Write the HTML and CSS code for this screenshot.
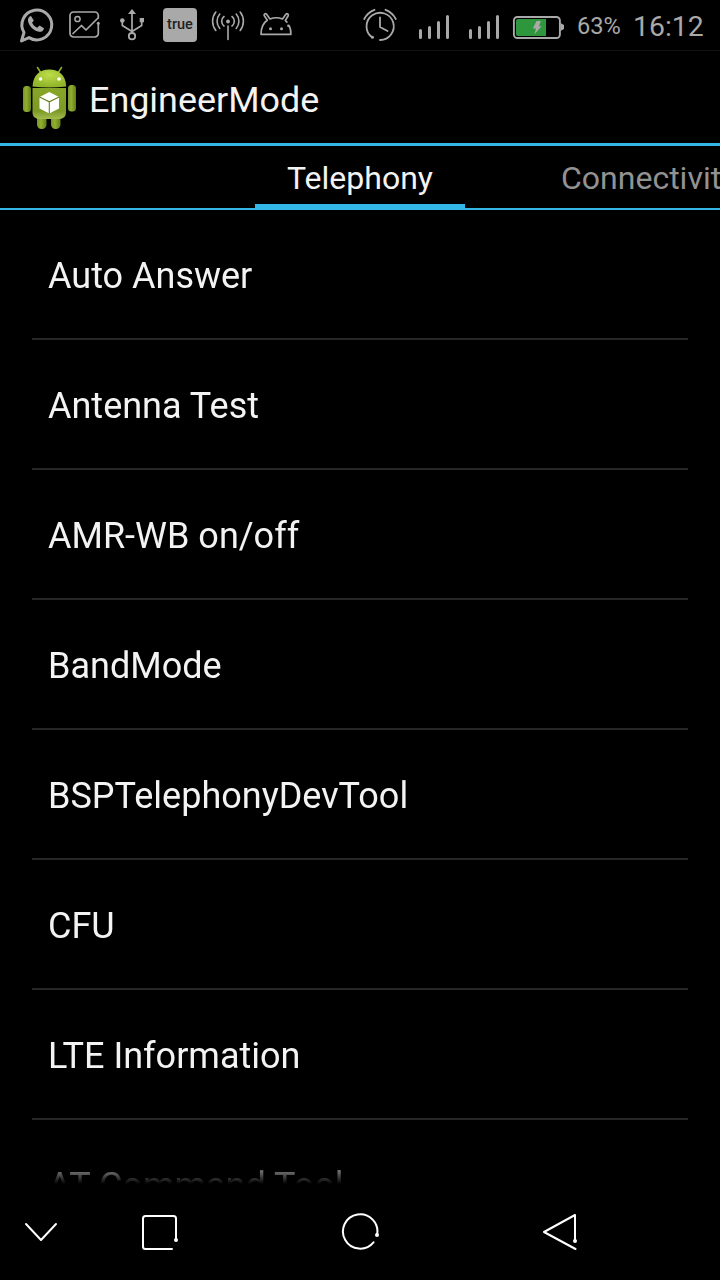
FILE: index.html
```html
<!DOCTYPE html>
<html lang="en">
<head>
<meta charset="utf-8">
<title>EngineerMode</title>
<link rel="stylesheet" href="styles.css">
</head>
<body>
<div class="screen">
  <header class="status">
    <div class="notifications">
      <svg class="icon" viewBox="16 0 40 50"><path d="M21.500 41 24 32.500A14.900 14.900 0 1 1 29 37.600Z" stroke-width="3"/><path class="fill" d="M31 16c-2 .5-3.300 2.300-3 4.800.7 5.200 5.800 10.200 11 11 2.500.3 4.800-1.200 5-3.600l-4.400-2.700-2.400 2.200c-2.300-1-4.100-2.700-5.100-5l1.700-2.300Z"/></svg>
      <svg class="icon" viewBox="64 0 40 50"><path d="M98.300 18V15.500a3.500 3.500 0 0 0-3.500-3.500H73.500a3.500 3.500 0 0 0-3.500 3.500v18a3.500 3.500 0 0 0 3.500 3.500H94.800a3.500 3.500 0 0 0 3.500-3.500V24M73 33.500 81.500 25.500 86 30 98 18" stroke-width="1.700"/><circle cx="77.500" cy="19" r="2.600" stroke-width="1.500"/><circle class="fill" cx="98.300" cy="23.200" r="1.500"/></svg>
      <svg class="icon" viewBox="112 0 40 50"><path d="M132 13V33M122.300 22v3.500L132 31.500 141.700 25.500V22" stroke-width="1.700"/><path class="fill" d="M132 9l4 5h-8zM139.700 18h4.300v4.300h-4.300z"/><circle class="fill" cx="122.300" cy="20.500" r="2.300"/><circle cx="132" cy="36.200" r="3.200" stroke-width="1.800"/></svg>
      <div class="true-slot"><span class="true-badge">true</span></div>
      <svg class="icon" viewBox="208 0 40 50"><path d="M228 26V39.500M224 16.500a6 6 0 0 0 0 9.500M232 16.500a6 6 0 0 1 0 9.500M219.800 14a11 11 0 0 0 0 14.500M236.200 14a11 11 0 0 1 0 14.500M215.800 12a15 15 0 0 0 0 18.500M240.200 12a15 15 0 0 1 0 18.500" stroke-width="1.600"/><circle class="fill" cx="228" cy="21.500" r="1.900"/></svg>
      <svg class="icon" viewBox="256 0 40 50"><path d="M289.500 26.500c1 2 1.400 4.500 1.400 7.800H261c0-7 1.800-11 6.300-14l-3-4.500c-.8-1.600 1.200-2.900 2.300-1.500L270 19c4-1.600 8.500-1.600 12.500 0l3.400-4.700c1.200-1.300 3 0 2.300 1.500l-2.900 4.700 1.600 1.700" stroke-width="1.700"/><circle class="fill" cx="270.500" cy="28.800" r="1.500"/><circle class="fill" cx="281.500" cy="28.800" r="1.500"/><circle class="fill" cx="288.500" cy="25.800" r="1.400"/></svg>
    </div>
    <div class="indicators">
      <svg class="icon alarm" viewBox="360 0 40 50"><path d="M372 37.300A13.600 13.600 0 1 1 380 40M364.200 19A19 19 0 0 1 374.500 9.800M395.800 19A19 19 0 0 0 385.500 9.800M380 17.500V27L387.500 31" stroke-width="1.800"/><circle class="fill" cx="372.500" cy="37.300" r="1.500"/></svg>
      <svg class="icon signal" viewBox="414 0 40 50"><path d="M420.500 30.500V37.500M429.500 27.500V37.500M438.500 22.500V37.500M447.500 16.500V37.500" stroke-width="3"/></svg>
      <svg class="icon signal second" viewBox="414 0 40 50"><path d="M420.500 30.500V37.500M429.500 27.500V37.500M438.500 22.500V37.500M447.500 16.500V37.500" stroke-width="3"/></svg>
      <svg class="battery" viewBox="510 0 56 50"><path class="charge" d="M518 19h28v17h-28a2 2 0 0 1-2-2v-13a2 2 0 0 1 2-2Z"/><rect x="513.900" y="17" width="46" height="21" rx="3.500" stroke-width="1.900"/><path class="fill" d="M560.500 23 564 25v4l-3.500 2ZM536.500 21h4.300l-1.800 5.200h2.500L534.300 34.500l1.700-6h-3.200Z"/></svg>
      <span class="percent">63%</span>
      <span class="clock">16:12</span>
    </div>
  </header>
  <div class="action-bar">
    <svg class="app-icon" viewBox="20 64 58 68">
      <defs>
        <linearGradient id="limb" x1="0" x2="1"><stop offset="0" stop-color="#78942a"/><stop offset=".4" stop-color="#91b02d"/><stop offset="1" stop-color="#627c1c"/></linearGradient>
        <linearGradient id="torso" x1="0" x2="0" y1="0" y2="1"><stop offset="0" stop-color="#86a628"/><stop offset=".75" stop-color="#7d9a25"/><stop offset="1" stop-color="#a3bd50"/></linearGradient>
        <radialGradient id="head" cx=".5" cy=".3" r=".65"><stop offset="0" stop-color="#bddc48"/><stop offset="1" stop-color="#91b52a"/></radialGradient>
      </defs>
      <path d="M37.500 67.500 41 73M61.500 67.500 58 73" fill="none" stroke="#8dab35" stroke-width="1.600" stroke-linecap="round"/>
      <rect x="37" y="113" width="9.500" height="16" rx="4.500" fill="url(#limb)"/>
      <rect x="51" y="113" width="9.500" height="16" rx="4.500" fill="url(#limb)"/>
      <rect x="23" y="86" width="8" height="26" rx="3.500" fill="url(#limb)"/>
      <rect x="68" y="85" width="8" height="26.500" rx="3.500" fill="url(#limb)"/>
      <path d="M32.500 88H66V112.500Q66 119 59 119H39.500Q32.500 119 32.500 112.500Z" fill="url(#torso)"/>
      <path d="M32.500 86.500C33 75 40 69.500 49.300 69.500S65.800 75 66.200 86.500Q49 88.500 32.500 86.500Z" fill="url(#head)"/>
      <circle cx="40.500" cy="79" r="1.800" fill="#fff"/><circle cx="59" cy="79" r="1.800" fill="#fff"/>
      <path d="M49.300 92 59 97V108.500L49.300 113.500 39.500 108.500V97Z" fill="#fff"/>
      <path d="M39.500 97 49.300 101.800 59 97M49.300 101.800V113.500" fill="none" stroke="#66801f" stroke-width="1.100"/>
    </svg>
    <h1 class="title">EngineerMode</h1>
  </div>
  <nav class="tabs">
    <div class="tab active">Telephony</div>
    <div class="tab next">Connectivity</div>
  </nav>
  <main class="list">
    <div class="row">Auto Answer</div>
    <div class="row">Antenna Test</div>
    <div class="row">AMR-WB on/off</div>
    <div class="row">BandMode</div>
    <div class="row">BSPTelephonyDevTool</div>
    <div class="row">CFU</div>
    <div class="row">LTE Information</div>
    <div class="row">AT Command Tool</div>
  </main>
  <footer class="nav">
    <svg class="hide" viewBox="21 1184 40 96"><path d="M26 1224 41 1240 56 1224"/></svg>
    <svg class="recent" viewBox="140 1184 40 96"><path d="M176 1240V1218.500Q176 1216 173.500 1216H145.500Q143 1216 143 1218.500V1246.500Q143 1249 145.500 1249H172"/><circle class="dot" cx="176" cy="1240" r="2"/></svg>
    <svg class="home" viewBox="340 1184 40 96"><path d="M377 1235A17.200 17.200 0 1 0 373.500 1242.300"/><circle class="dot" cx="377" cy="1235" r="2"/></svg>
    <svg class="back" viewBox="540 1184 40 96"><path d="M575 1241V1215L544 1232 575.500 1249"/><circle class="dot" cx="575" cy="1241" r="2"/></svg>
  </footer>
</div>
</body>
</html>
```
FILE: styles.css
```css
* { box-sizing: border-box; }
body { margin: 0; background: #000; font-family: Roboto, sans-serif; }
.screen {
  display: flex;
  flex-direction: column;
  width: 720px;
  height: 1280px;
  overflow: hidden;
  background: #000;
  color: #f3f3f3;
}

.status {
  display: flex;
  justify-content: space-between;
  height: 51px;
  padding: 0 16px;
  border-bottom: 1px solid #121212;
  color: #a9a9a9;
}
.notifications { display: flex; gap: 8px; }
.indicators { display: flex; }
.icon, .battery {
  width: 40px;
  height: 50px;
  fill: none;
  stroke: #a9a9a9;
  stroke-linecap: round;
  stroke-linejoin: round;
}
.status .fill { fill: #a9a9a9; stroke: none; }
.true-slot { display: flex; align-items: center; justify-content: center; width: 40px; height: 50px; }
.true-badge {
  width: 34px;
  height: 34px;
  border-radius: 4px;
  background: #a9a9a9;
  color: #222;
  font: 500 14.5px/34px Roboto, sans-serif;
  text-align: center;
}
.alarm { margin-right: 14px; }
.second { margin-left: 10px; }
.battery { width: 56px; margin-left: 6px; }
.battery .charge { fill: #2e963c; stroke: none; }
.percent { width: 56px; margin-left: 11px; font-size: 23.6px; line-height: 52px; }
.clock { width: 71px; font-size: 28.4px; line-height: 53px; white-space: nowrap; }

.action-bar {
  display: flex;
  align-items: center;
  height: 95px;
  padding: 2px 20px 0;
  border-bottom: 3px solid #33b5e5;
}
.app-icon { width: 58px; height: 68px; }
.title { margin: 4px 0 0 11px; font-size: 35.9px; font-weight: 400; line-height: 48px; }

.tabs {
  display: flex;
  height: 64px;
  padding-left: 255px;
  overflow: hidden;
  border-bottom: 2px solid #33b5e5;
  font-size: 32px;
  line-height: 64px;
}
.tab { flex: none; }
.active {
  width: 210px;
  height: 62px;
  border-bottom: 4px solid #33b5e5;
  text-align: center;
}
.next { margin-left: 96px; color: #929292; }

.list {
  height: 974px;
  padding: 0 32px;
  overflow: hidden;
  -webkit-mask-image: linear-gradient(#000 calc(100% - 28px), transparent);
  mask-image: linear-gradient(#000 calc(100% - 28px), transparent);
}
.row {
  height: 130px;
  padding: 0 16px;
  border-bottom: 2px solid #262626;
  font-size: 36px;
  line-height: 132px;
}

.nav { display: flex; height: 96px; padding-left: 21px; }
.nav svg {
  width: 40px;
  height: 96px;
  fill: none;
  stroke: #fff;
  stroke-width: 2;
  stroke-linecap: round;
  stroke-linejoin: round;
}
.nav .recent { margin-left: 79px; }
.nav .home, .nav .back { margin-left: 160px; }
.nav .dot { fill: #fff; stroke: none; }
```
